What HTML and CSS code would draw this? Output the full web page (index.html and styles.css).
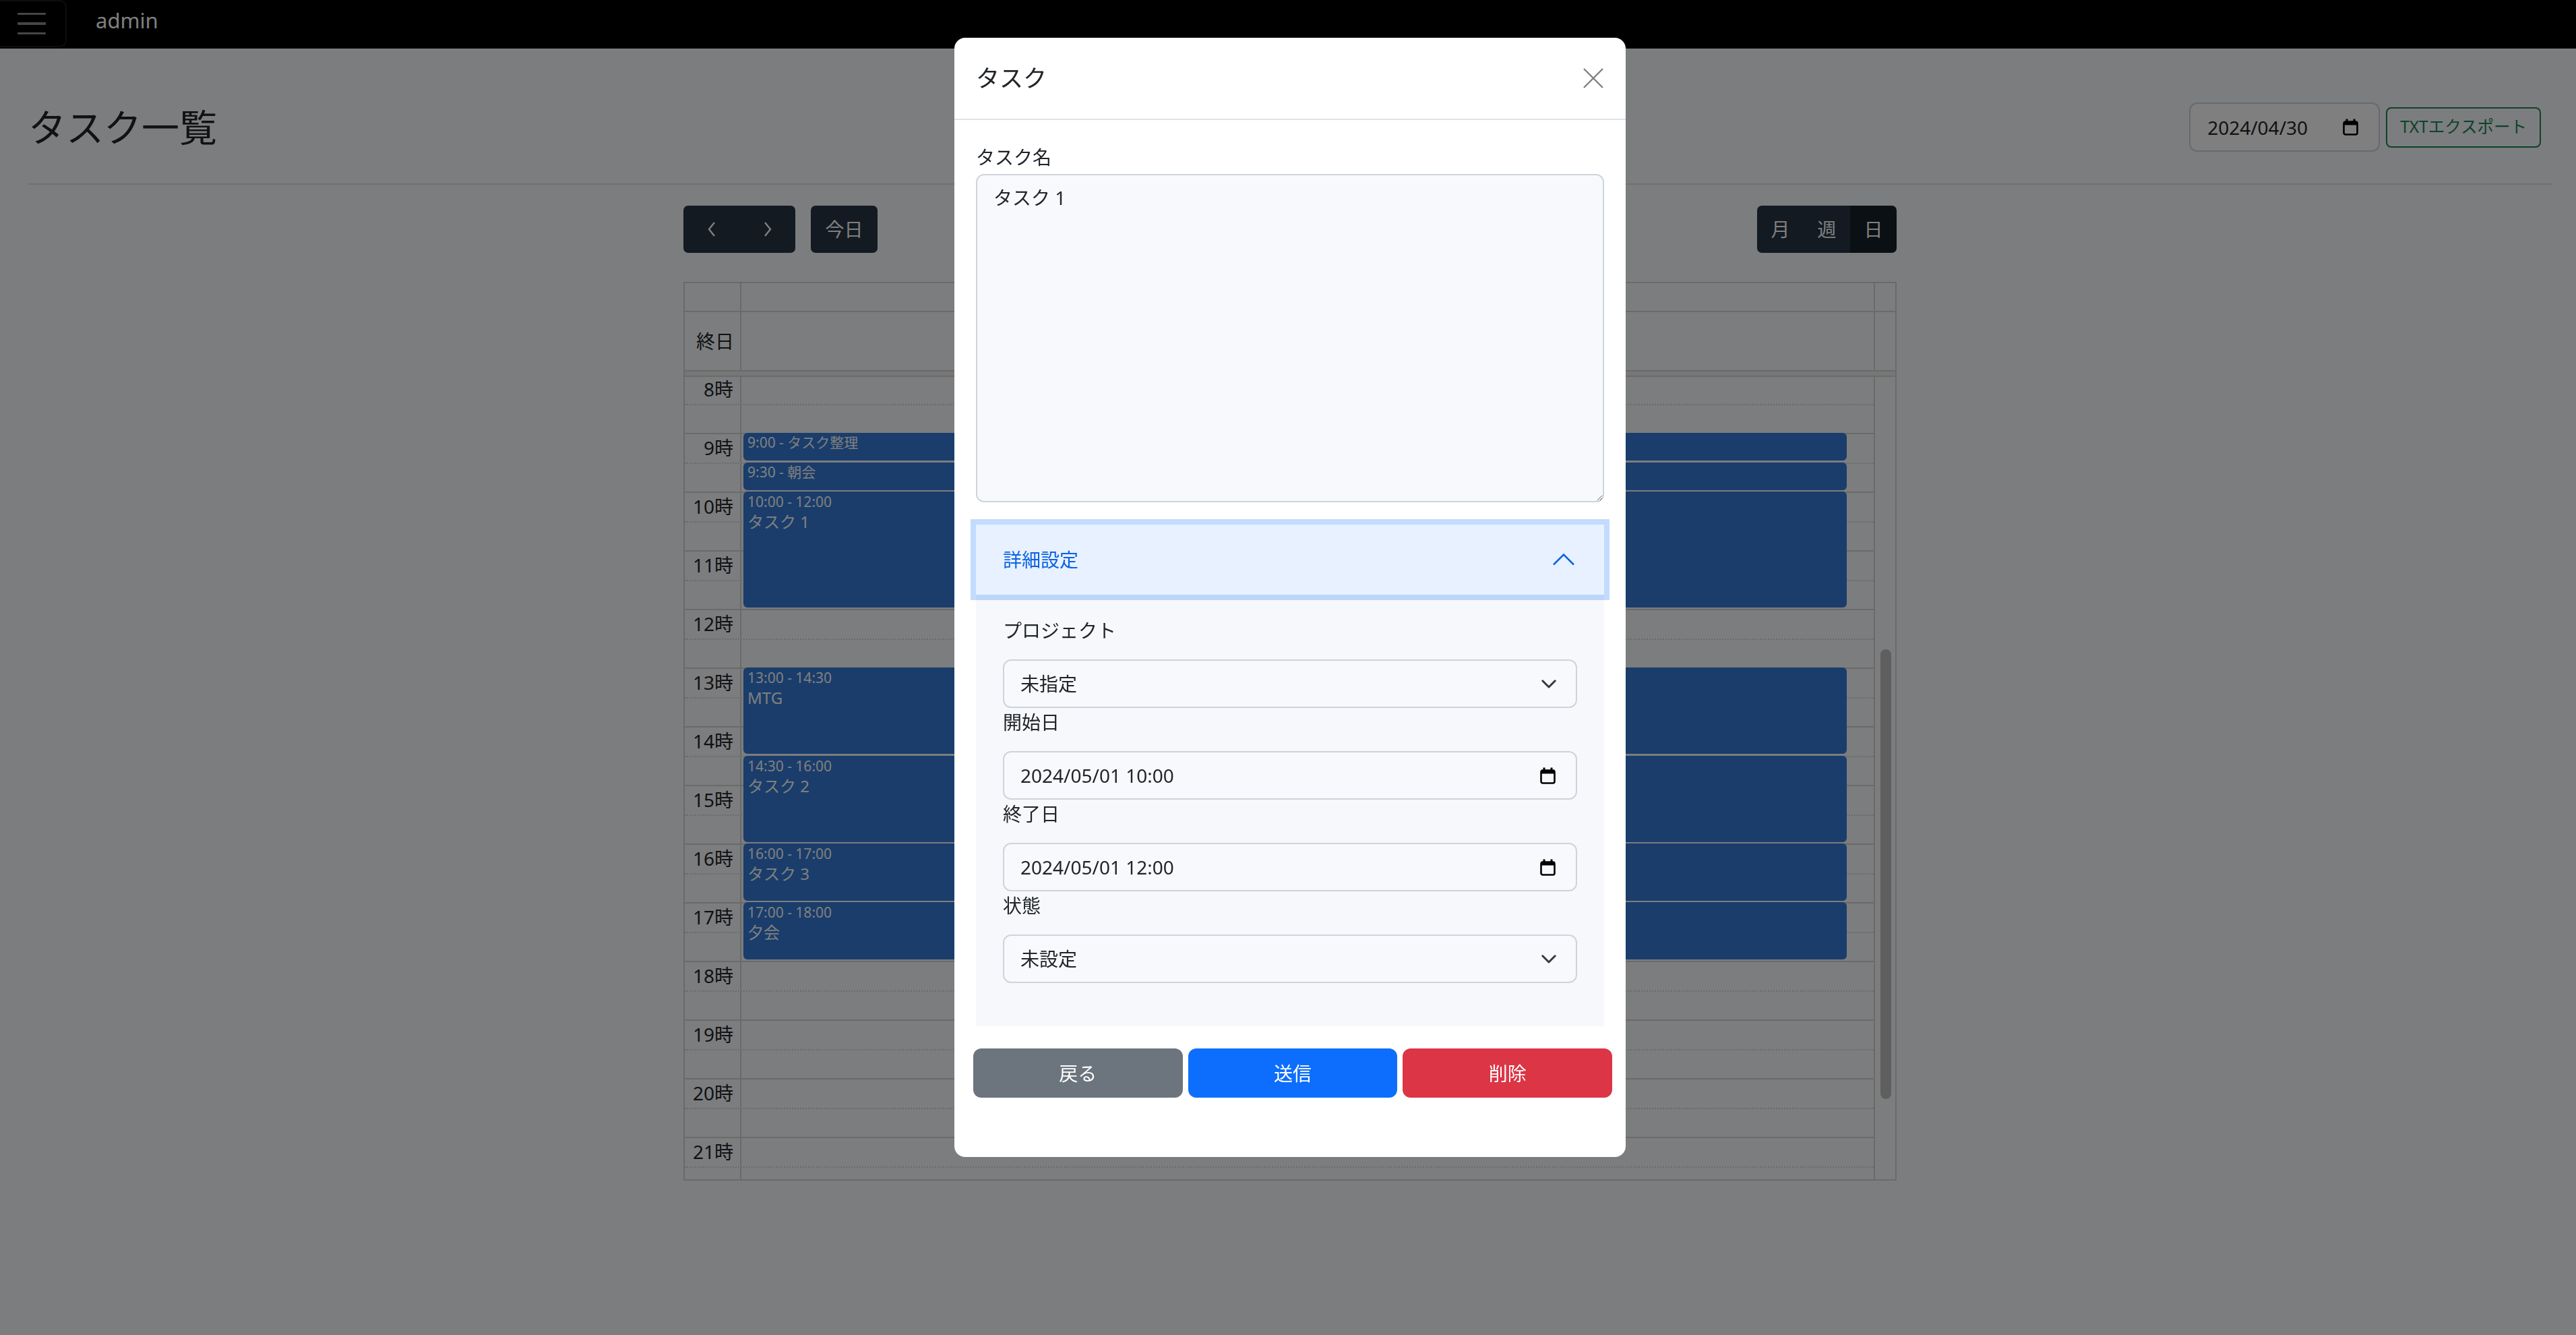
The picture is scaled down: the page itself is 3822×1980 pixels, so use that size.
FILE: index.html
```html
<!DOCTYPE html>
<html lang="ja">
<head>
<meta charset="utf-8">
<title>タスク一覧</title>
<link rel="stylesheet" href="styles.css">
</head>
<body>
<nav class="topbar">
  <button class="burger" type="button" aria-label="menu"><span></span><span></span><span></span></button>
  <span class="brand">admin</span>
</nav>

<main class="main">
  <div class="page-head">
    <h1 class="page-title">タスク一覧</h1>
    <div class="head-tools">
      <div class="date-field">
        <span>2024/04/30</span>
        <svg class="cal-ico" viewBox="0 0 23 25" width="23" height="25"><rect x="1.5" y="4.5" width="20" height="19" rx="2.5" fill="none" stroke="#000" stroke-width="2.6"/><rect x="1.5" y="4.5" width="20" height="5" fill="#000"/><rect x="4.5" y="0.5" width="3" height="5" fill="#000"/><rect x="15.5" y="0.5" width="3" height="5" fill="#000"/></svg>
      </div>
      <button class="btn-export" type="button">TXTエクスポート</button>
    </div>
  </div>

  <section class="calendar">
    <div class="fc-toolbar">
      <div class="fc-left">
        <div class="fc-group">
          <button class="fc-btn fc-arrow" type="button" aria-label="prev"><svg viewBox="0 0 16 24" width="16" height="24"><polyline points="12,2 4,12 12,22" fill="none" stroke="#fff" stroke-width="2.4"/></svg></button>
          <button class="fc-btn fc-arrow" type="button" aria-label="next"><svg viewBox="0 0 16 24" width="16" height="24"><polyline points="4,2 12,12 4,22" fill="none" stroke="#fff" stroke-width="2.4"/></svg></button>
        </div>
        <button class="fc-btn fc-today" type="button">今日</button>
      </div>
      <div class="fc-group">
        <button class="fc-btn fc-view-btn" type="button">月</button>
        <button class="fc-btn fc-view-btn" type="button">週</button>
        <button class="fc-btn fc-view-btn active" type="button">日</button>
      </div>
    </div>

    <div class="fc-view">
      <div class="fc-row fc-head"><div class="fc-axis"></div><div class="fc-day"></div><div class="fc-gutter"></div></div>
      <div class="fc-row fc-allday"><div class="fc-axis">終日</div><div class="fc-day"></div><div class="fc-gutter"></div></div>
      <div class="fc-divider"></div>
      <div class="fc-body">
        <div class="fc-scroller">
          <div class="fc-slats">
            <div class="slot"><div class="slot-axis">8時</div><div class="slot-lane"></div></div>
            <div class="slot half"><div class="slot-axis"></div><div class="slot-lane"></div></div>
            <div class="slot"><div class="slot-axis">9時</div><div class="slot-lane"></div></div>
            <div class="slot half"><div class="slot-axis"></div><div class="slot-lane"></div></div>
            <div class="slot"><div class="slot-axis">10時</div><div class="slot-lane"></div></div>
            <div class="slot half"><div class="slot-axis"></div><div class="slot-lane"></div></div>
            <div class="slot"><div class="slot-axis">11時</div><div class="slot-lane"></div></div>
            <div class="slot half"><div class="slot-axis"></div><div class="slot-lane"></div></div>
            <div class="slot"><div class="slot-axis">12時</div><div class="slot-lane"></div></div>
            <div class="slot half"><div class="slot-axis"></div><div class="slot-lane"></div></div>
            <div class="slot"><div class="slot-axis">13時</div><div class="slot-lane"></div></div>
            <div class="slot half"><div class="slot-axis"></div><div class="slot-lane"></div></div>
            <div class="slot"><div class="slot-axis">14時</div><div class="slot-lane"></div></div>
            <div class="slot half"><div class="slot-axis"></div><div class="slot-lane"></div></div>
            <div class="slot"><div class="slot-axis">15時</div><div class="slot-lane"></div></div>
            <div class="slot half"><div class="slot-axis"></div><div class="slot-lane"></div></div>
            <div class="slot"><div class="slot-axis">16時</div><div class="slot-lane"></div></div>
            <div class="slot half"><div class="slot-axis"></div><div class="slot-lane"></div></div>
            <div class="slot"><div class="slot-axis">17時</div><div class="slot-lane"></div></div>
            <div class="slot half"><div class="slot-axis"></div><div class="slot-lane"></div></div>
            <div class="slot"><div class="slot-axis">18時</div><div class="slot-lane"></div></div>
            <div class="slot half"><div class="slot-axis"></div><div class="slot-lane"></div></div>
            <div class="slot"><div class="slot-axis">19時</div><div class="slot-lane"></div></div>
            <div class="slot half"><div class="slot-axis"></div><div class="slot-lane"></div></div>
            <div class="slot"><div class="slot-axis">20時</div><div class="slot-lane"></div></div>
            <div class="slot half"><div class="slot-axis"></div><div class="slot-lane"></div></div>
            <div class="slot"><div class="slot-axis">21時</div><div class="slot-lane"></div></div>
            <div class="slot half"><div class="slot-axis"></div><div class="slot-lane"></div></div>

            <div class="fc-events">
              <div class="fc-event short" style="top:87px;height:41px"><span class="fc-time">9:00 - </span><span class="fc-title">タスク整理</span></div>
              <div class="fc-event short" style="top:130.5px;height:41px"><span class="fc-time">9:30 - </span><span class="fc-title">朝会</span></div>
              <div class="fc-event" style="top:174px;height:171.5px"><span class="fc-time">10:00 - 12:00</span><span class="fc-title">タスク 1</span></div>
              <div class="fc-event" style="top:435px;height:128px"><span class="fc-time">13:00 - 14:30</span><span class="fc-title">MTG</span></div>
              <div class="fc-event" style="top:565.5px;height:128px"><span class="fc-time">14:30 - 16:00</span><span class="fc-title">タスク 2</span></div>
              <div class="fc-event" style="top:696px;height:84.5px"><span class="fc-time">16:00 - 17:00</span><span class="fc-title">タスク 3</span></div>
              <div class="fc-event" style="top:783px;height:84.5px"><span class="fc-time">17:00 - 18:00</span><span class="fc-title">夕会</span></div>
            </div>
          </div>
        </div>
        <div class="fc-scrollbar"><div class="fc-thumb"></div></div>
      </div>
    </div>
  </section>
</main>

<div class="backdrop"></div>

<div class="modal-layer">
  <div class="modal">
    <div class="modal-header">
      <h5 class="modal-title">タスク</h5>
      <button class="btn-close" type="button" aria-label="close"><svg viewBox="0 0 16 16" width="32" height="32"><path d="M1 1 15 15 M15 1 1 15" stroke="#000" stroke-width="1.2" fill="none"/></svg></button>
    </div>
    <div class="modal-body">
      <label class="field-label">タスク名</label>
      <textarea class="control textarea">タスク 1</textarea>
      <div class="accordion">
        <button class="acc-btn" type="button"><span>詳細設定</span><svg viewBox="0 0 16 16" width="40" height="40"><path d="M2 11 8 5 14 11" fill="none" stroke="#0c63e4" stroke-width="1"/></svg></button>
        <div class="acc-body">
          <div class="field">
            <label>プロジェクト</label>
            <div class="control box"><span>未指定</span><svg viewBox="0 0 22 13" width="22" height="13"><polyline points="1.8,1.8 11,11 20.2,1.8" fill="none" stroke="#343a40" stroke-width="3" stroke-linecap="round" stroke-linejoin="round"/></svg></div>
          </div>
          <div class="field">
            <label>開始日</label>
            <div class="control box"><span>2024/05/01 10:00</span><svg viewBox="0 0 23 25" width="25" height="25"><rect x="1.5" y="4.5" width="20" height="19" rx="2.5" fill="none" stroke="#000" stroke-width="2.6"/><rect x="1.5" y="4.5" width="20" height="5" fill="#000"/><rect x="4.5" y="0.5" width="3" height="5" fill="#000"/><rect x="15.5" y="0.5" width="3" height="5" fill="#000"/></svg></div>
          </div>
          <div class="field">
            <label>終了日</label>
            <div class="control box"><span>2024/05/01 12:00</span><svg viewBox="0 0 23 25" width="25" height="25"><rect x="1.5" y="4.5" width="20" height="19" rx="2.5" fill="none" stroke="#000" stroke-width="2.6"/><rect x="1.5" y="4.5" width="20" height="5" fill="#000"/><rect x="4.5" y="0.5" width="3" height="5" fill="#000"/><rect x="15.5" y="0.5" width="3" height="5" fill="#000"/></svg></div>
          </div>
          <div class="field">
            <label>状態</label>
            <div class="control box"><span>未設定</span><svg viewBox="0 0 22 13" width="22" height="13"><polyline points="1.8,1.8 11,11 20.2,1.8" fill="none" stroke="#343a40" stroke-width="3" stroke-linecap="round" stroke-linejoin="round"/></svg></div>
          </div>
        </div>
      </div>
    </div>
    <div class="modal-actions">
      <button class="btn btn-secondary" type="button">戻る</button>
      <button class="btn btn-primary" type="button">送信</button>
      <button class="btn btn-danger" type="button">削除</button>
    </div>
  </div>
</div>
</body>
</html>
```

FILE: styles.css
```css
* { box-sizing: border-box; }

html, body { margin: 0; }

body {
  width: 3822px;
  height: 1980px;
  overflow: hidden;
  background: #f9fafd;
  font-family: "Noto Sans", "Noto Sans CJK JP", sans-serif;
  font-size: 28px;
  line-height: 42px;
  color: #212529;
}

button, textarea { font-family: inherit; }

/* ---------- top bar ---------- */
.topbar {
  height: 72px;
  background: #000;
  display: flex;
  align-items: center;
}

.burger {
  align-self: flex-start;
  width: 109px;
  height: 70px;
  margin: 0 0 0 -10px;
  padding: 0 0 0 34px;
  background: transparent;
  border: 2px solid rgba(255, 255, 255, 0.1);
  border-radius: 10px;
  display: flex;
  flex-direction: column;
  justify-content: center;
  align-items: flex-start;
  gap: 11px;
}

.burger span {
  display: block;
  width: 42px;
  height: 3.5px;
  background: rgba(255, 255, 255, 0.55);
  border-radius: 1px;
}

.brand {
  margin: 0 0 12px 43px;
  color: #fff;
  font-size: 31px;
  line-height: 42px;
}

/* ---------- page header ---------- */
.main { padding: 0 36px 0 42px; }

.page-head {
  display: flex;
  justify-content: space-between;
  align-items: center;
  padding: 80px 0 47px;
  border-bottom: 2px solid #dee2e6;
}

.page-title {
  margin: 0;
  font-size: 56px;
  line-height: 67px;
  font-weight: 400;
}

.head-tools {
  display: flex;
  align-items: center;
  gap: 9px;
  margin-right: 16px;
}

.date-field {
  width: 283px;
  height: 73px;
  padding: 0 30px 0 25px;
  border: 2px solid #ced4da;
  border-radius: 12px;
  background: #fff;
  display: flex;
  align-items: center;
  justify-content: space-between;
}

.btn-export {
  height: 60px;
  padding: 0 19px;
  border: 2px solid #198754;
  border-radius: 8px;
  background: transparent;
  color: #198754;
  font-size: 24.5px;
  line-height: 1;
}

/* ---------- calendar ---------- */
.calendar {
  width: 1800px;
  margin: 31px auto 0;
}

.fc-toolbar {
  display: flex;
  justify-content: space-between;
  align-items: center;
  margin-bottom: 43px;
}

.fc-left { display: flex; gap: 23px; }

.fc-group { display: flex; }

.fc-btn {
  height: 70px;
  padding: 0;
  border: 0;
  background: #263545;
  color: #fff;
  font-size: 28px;
  line-height: 1;
  display: flex;
  align-items: center;
  justify-content: center;
}

.fc-group .fc-btn:first-child { border-radius: 7px 0 0 7px; }
.fc-group .fc-btn:last-child { border-radius: 0 7px 7px 0; }

.fc-arrow { width: 83px; }
.fc-today { width: 99px; border-radius: 7px; }
.fc-view-btn { width: 69px; }
.fc-view-btn.active { background: #172029; }

.fc-view { border: 2px solid #d4d4d4; }

.fc-row {
  display: grid;
  grid-template-columns: 84px 1fr 30px;
  border-bottom: 2px solid #d4d4d4;
}

.fc-head { height: 43px; }
.fc-allday { height: 88px; }

.fc-row .fc-axis,
.fc-row .fc-day { border-right: 2px solid #d4d4d4; }

.fc-allday .fc-axis {
  display: flex;
  align-items: center;
  justify-content: flex-end;
  padding-right: 9px;
}

.fc-divider {
  height: 8px;
  background: #eeeeee;
  border-bottom: 2px solid #d4d4d4;
}

.fc-body {
  display: grid;
  grid-template-columns: 1fr 30px;
  height: 1190px;
}

.fc-scroller {
  overflow: hidden;
  border-right: 2px solid #d4d4d4;
}

.fc-slats {
  position: relative;
  margin-top: -4px;
}

.slot {
  display: grid;
  grid-template-columns: 84px 1fr;
  height: 43.5px;
  border-top: 2px solid #d4d4d4;
}

.slot.half { border-top-style: dotted; }

.slot-axis {
  border-right: 2px solid #d4d4d4;
  text-align: right;
  padding-right: 10px;
  line-height: 40px;
}

.fc-events {
  position: absolute;
  top: 0;
  bottom: 0;
  left: 87px;
  right: 40px;
}

.fc-event {
  position: absolute;
  left: 0;
  right: 0;
  padding: 2px 6px;
  background: #357bd6;
  border-radius: 6px;
  color: #fff;
  font-size: 21px;
  line-height: 27px;
  overflow: hidden;
}

.fc-time {
  display: block;
  font-size: 21px;
  line-height: 27px;
}

.fc-title {
  display: block;
  font-size: 24px;
  line-height: 31px;
}

.fc-event.short { padding-top: 1px; }

.fc-event.short .fc-time,
.fc-event.short .fc-title {
  display: inline;
  font-size: 21px;
  line-height: 27px;
}

.fc-scrollbar { padding: 404px 0 0 8px; }

.fc-thumb {
  width: 16px;
  height: 667px;
  border-radius: 8px;
  background: #bebebe;
}

/* ---------- modal ---------- */
.backdrop {
  position: fixed;
  inset: 0;
  background: rgba(0, 0, 0, 0.5);
}

.modal-layer {
  position: fixed;
  inset: 0;
  display: flex;
  justify-content: center;
  align-items: flex-start;
  padding: 56px 0 0 6px;
}

.modal {
  width: 996px;
  background: #fff;
  border-radius: 16px;
}

.modal-header {
  display: flex;
  align-items: center;
  justify-content: space-between;
  padding: 32px;
  border-bottom: 2px solid #dee2e6;
}

.modal-title {
  margin: 0;
  font-size: 35px;
  line-height: 56px;
  font-weight: 400;
}

.btn-close {
  width: 48px;
  height: 48px;
  padding: 8px;
  margin: -8px -8px -8px auto;
  border: 0;
  background: transparent;
  opacity: 0.5;
  display: flex;
}

.modal-body { padding: 34px 32px 0; }

.field-label {
  display: block;
  margin-bottom: 4px;
}

.control {
  width: 100%;
  border: 2px solid #ced4da;
  border-radius: 12px;
  background: #f8f9fc;
  color: #212529;
  font-size: 28px;
  line-height: 42px;
}

.textarea {
  display: block;
  height: 487px;
  margin: 0 0 33px;
  padding: 12px 24px;
  resize: vertical;
}

.acc-btn {
  position: relative;
  z-index: 1;
  width: 100%;
  height: 104px;
  padding: 0 40px;
  border: 0;
  background: #e7f1ff;
  color: #0c63e4;
  box-shadow: 0 0 0 8px rgba(13, 110, 253, 0.25);
  font-size: 28px;
  line-height: 42px;
  display: flex;
  align-items: center;
  justify-content: space-between;
}

.acc-body {
  background: #f7f8fb;
  padding: 32px 40px 64px;
}

.field label {
  display: block;
  margin-bottom: 22px;
}

.box {
  height: 72px;
  padding: 0 29px 0 24px;
  display: flex;
  align-items: center;
  justify-content: space-between;
}

.modal-actions {
  display: flex;
  gap: 8px;
  padding: 33px 20px 88px 28px;
}

.btn {
  flex: 1;
  height: 73px;
  border: 0;
  border-radius: 12px;
  color: #fff;
  font-size: 28px;
  line-height: 1;
}

.btn-secondary { background: #6c757d; }
.btn-primary { background: #0d6efd; }
.btn-danger { background: #dc3545; }
```
